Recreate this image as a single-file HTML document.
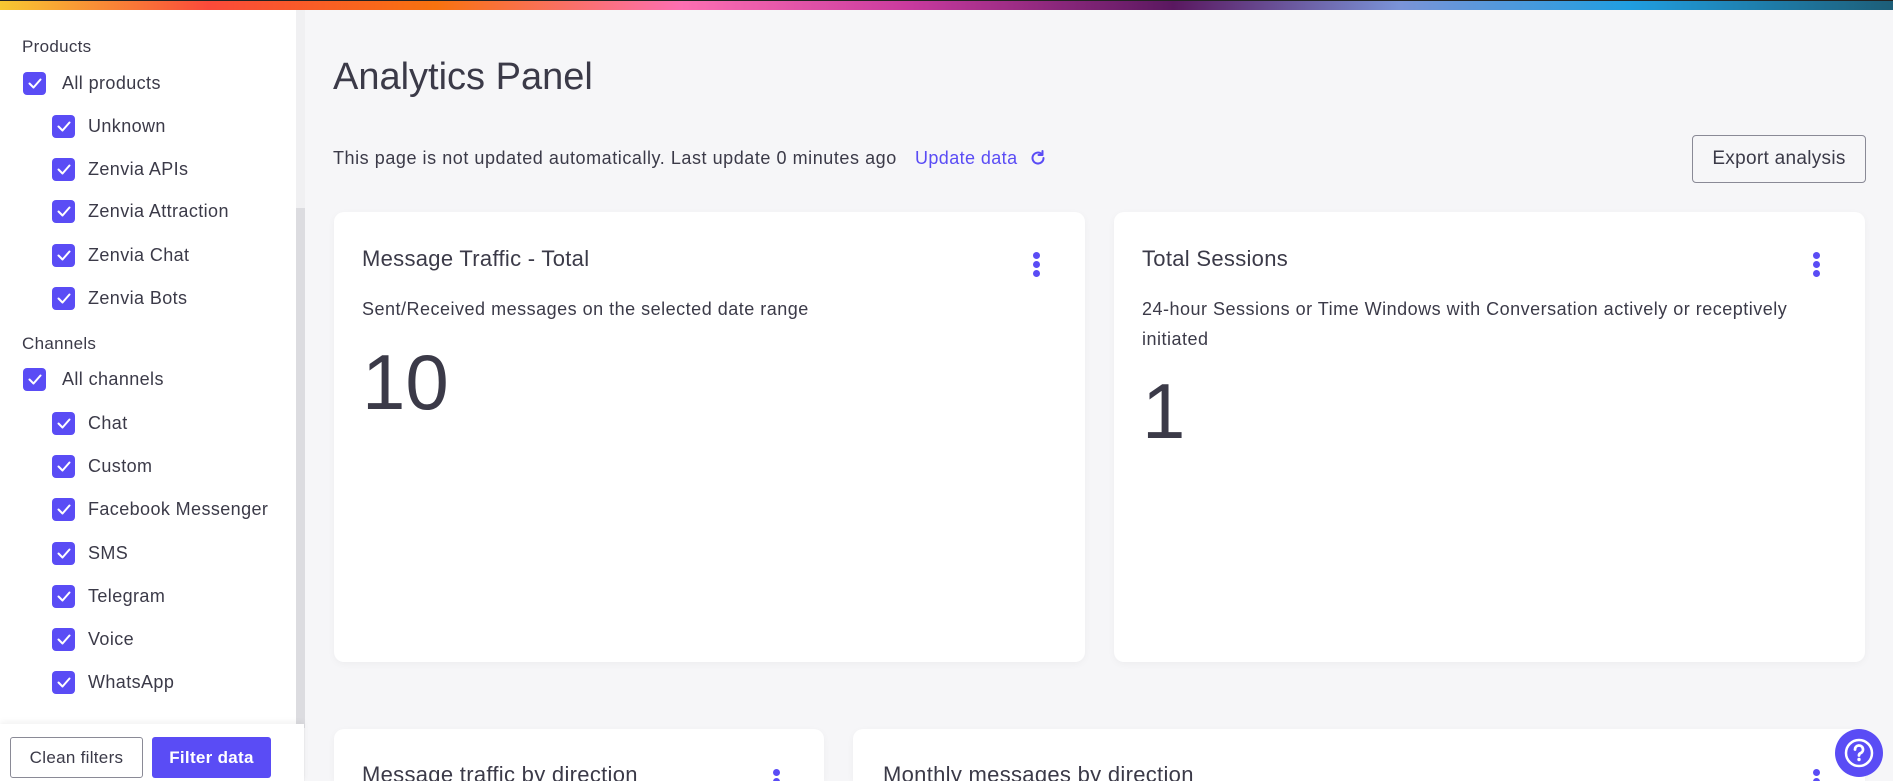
<!DOCTYPE html>
<html style="overflow:hidden;width:1893px;height:781px"><head><meta charset="utf-8"><style>
*{box-sizing:border-box;margin:0;padding:0}
body{width:1893px;height:781px;overflow:hidden;background:#f6f6f8;font-family:"Liberation Sans",sans-serif;color:#3b3a48;position:relative}
.bar{position:absolute;left:0;top:0;width:1893px;height:10px;background:linear-gradient(90deg,#f7c832 0%,#fb4a3a 11%,#f7720f 23%,#fd6fb2 36%,#c93a9e 48%,#5a1860 62%,#7a94d8 74%,#209ee0 86%,#1d5e78 100%);border-top:1px solid #222}
.side{position:absolute;left:0;top:10px;width:296px;height:771px;background:#fff}
.sb{position:absolute;left:296px;top:10px;width:9px;height:771px;background:#f0f0f2}
.sbt{position:absolute;left:296px;top:208px;width:9px;height:520px;background:#dcdce0}
.lbl{position:absolute;left:22px;font-size:17px;color:#3b3a48;letter-spacing:.3px}
.row{position:absolute;display:flex;align-items:center;font-size:18px;height:24px;letter-spacing:.4px}
.cb{width:23px;height:23px;background:#5a4cf5;border-radius:4px;margin-right:16px;display:flex;align-items:center;justify-content:center}
.bot{position:absolute;left:0;top:724px;width:304px;height:57px;background:#fff;box-shadow:0 -2px 6px rgba(0,0,0,.06)}
.btn{position:absolute;top:737px;height:41px;font-size:17px;display:flex;align-items:center;justify-content:center;border-radius:3px;letter-spacing:.3px}
h1{position:absolute;left:333px;top:56px;font-size:38px;font-weight:normal;color:#3b3a48}
.info{position:absolute;left:333px;top:148px;font-size:18px;letter-spacing:.55px}
.upd{position:absolute;left:915px;top:148px;font-size:18px;color:#5a4cf5;letter-spacing:.4px}
.exp{position:absolute;left:1692px;top:135px;width:174px;height:48px;border:1px solid #8a8a96;border-radius:4px;font-size:19px;display:flex;align-items:center;justify-content:center;letter-spacing:.3px}
.card{position:absolute;background:#fff;border-radius:10px;box-shadow:0 2px 8px rgba(0,0,0,.04)}
.ct{position:absolute;font-size:22px;letter-spacing:.3px}
.cs{position:absolute;font-size:18px;line-height:30px;letter-spacing:.5px}
.big{position:absolute;font-size:78px;font-weight:300}
.keb{position:absolute;width:7px}
.keb i{display:block;width:7px;height:7px;border-radius:50%;background:#5a4cf5;margin-bottom:2px}
.help{position:absolute;left:1835px;top:729px;width:48px;height:48px;border-radius:50%;background:#5a4cf5;display:flex;align-items:center;justify-content:center}
</style></head><body>
<div class="bar"></div>
<div class="side"></div><div class="sb"></div><div class="sbt"></div>
<div class="lbl" style="top:37px">Products</div>
<div class="row" style="left:23px;top:71px"><div class="cb"><svg width="14" height="11" viewBox="0 0 14 11"><path d="M1.5 5.5l4 4 7-8" stroke="#fff" stroke-width="2" fill="none" stroke-linecap="round" stroke-linejoin="round"/></svg></div>All products</div>
<div class="row" style="left:52px;top:114px"><div class="cb" style="margin-right:13px"><svg width="14" height="11" viewBox="0 0 14 11"><path d="M1.5 5.5l4 4 7-8" stroke="#fff" stroke-width="2" fill="none" stroke-linecap="round" stroke-linejoin="round"/></svg></div>Unknown</div>
<div class="row" style="left:52px;top:157px"><div class="cb" style="margin-right:13px"><svg width="14" height="11" viewBox="0 0 14 11"><path d="M1.5 5.5l4 4 7-8" stroke="#fff" stroke-width="2" fill="none" stroke-linecap="round" stroke-linejoin="round"/></svg></div>Zenvia APIs</div>
<div class="row" style="left:52px;top:199px"><div class="cb" style="margin-right:13px"><svg width="14" height="11" viewBox="0 0 14 11"><path d="M1.5 5.5l4 4 7-8" stroke="#fff" stroke-width="2" fill="none" stroke-linecap="round" stroke-linejoin="round"/></svg></div>Zenvia Attraction</div>
<div class="row" style="left:52px;top:243px"><div class="cb" style="margin-right:13px"><svg width="14" height="11" viewBox="0 0 14 11"><path d="M1.5 5.5l4 4 7-8" stroke="#fff" stroke-width="2" fill="none" stroke-linecap="round" stroke-linejoin="round"/></svg></div>Zenvia Chat</div>
<div class="row" style="left:52px;top:286px"><div class="cb" style="margin-right:13px"><svg width="14" height="11" viewBox="0 0 14 11"><path d="M1.5 5.5l4 4 7-8" stroke="#fff" stroke-width="2" fill="none" stroke-linecap="round" stroke-linejoin="round"/></svg></div>Zenvia Bots</div>
<div class="lbl" style="top:334px">Channels</div>
<div class="row" style="left:23px;top:367px"><div class="cb"><svg width="14" height="11" viewBox="0 0 14 11"><path d="M1.5 5.5l4 4 7-8" stroke="#fff" stroke-width="2" fill="none" stroke-linecap="round" stroke-linejoin="round"/></svg></div>All channels</div>
<div class="row" style="left:52px;top:411px"><div class="cb" style="margin-right:13px"><svg width="14" height="11" viewBox="0 0 14 11"><path d="M1.5 5.5l4 4 7-8" stroke="#fff" stroke-width="2" fill="none" stroke-linecap="round" stroke-linejoin="round"/></svg></div>Chat</div>
<div class="row" style="left:52px;top:454px"><div class="cb" style="margin-right:13px"><svg width="14" height="11" viewBox="0 0 14 11"><path d="M1.5 5.5l4 4 7-8" stroke="#fff" stroke-width="2" fill="none" stroke-linecap="round" stroke-linejoin="round"/></svg></div>Custom</div>
<div class="row" style="left:52px;top:497px"><div class="cb" style="margin-right:13px"><svg width="14" height="11" viewBox="0 0 14 11"><path d="M1.5 5.5l4 4 7-8" stroke="#fff" stroke-width="2" fill="none" stroke-linecap="round" stroke-linejoin="round"/></svg></div>Facebook Messenger</div>
<div class="row" style="left:52px;top:541px"><div class="cb" style="margin-right:13px"><svg width="14" height="11" viewBox="0 0 14 11"><path d="M1.5 5.5l4 4 7-8" stroke="#fff" stroke-width="2" fill="none" stroke-linecap="round" stroke-linejoin="round"/></svg></div>SMS</div>
<div class="row" style="left:52px;top:584px"><div class="cb" style="margin-right:13px"><svg width="14" height="11" viewBox="0 0 14 11"><path d="M1.5 5.5l4 4 7-8" stroke="#fff" stroke-width="2" fill="none" stroke-linecap="round" stroke-linejoin="round"/></svg></div>Telegram</div>
<div class="row" style="left:52px;top:627px"><div class="cb" style="margin-right:13px"><svg width="14" height="11" viewBox="0 0 14 11"><path d="M1.5 5.5l4 4 7-8" stroke="#fff" stroke-width="2" fill="none" stroke-linecap="round" stroke-linejoin="round"/></svg></div>Voice</div>
<div class="row" style="left:52px;top:670px"><div class="cb" style="margin-right:13px"><svg width="14" height="11" viewBox="0 0 14 11"><path d="M1.5 5.5l4 4 7-8" stroke="#fff" stroke-width="2" fill="none" stroke-linecap="round" stroke-linejoin="round"/></svg></div>WhatsApp</div>
<div class="bot"></div>
<div class="btn" style="left:10px;width:133px;border:1px solid #8a8a96">Clean filters</div>
<div class="btn" style="left:152px;width:119px;background:#5a4cf5;color:#fff;font-weight:bold">Filter data</div>
<h1>Analytics Panel</h1>
<div class="info">This page is not updated automatically. Last update 0 minutes ago</div>
<div class="upd">Update data <svg width="18" height="18" viewBox="0 0 18 18" style="vertical-align:-3px;margin-left:6px"><path d="M14.5 9A5.5 5.5 0 1 1 12.5 4.8" stroke="#5a4cf5" stroke-width="2" fill="none" stroke-linecap="round"/><path d="M13.5 2v4h-4" stroke="#5a4cf5" stroke-width="2" fill="none" stroke-linecap="round" stroke-linejoin="round"/></svg></div>
<div class="exp">Export analysis</div>
<div class="card" style="left:334px;top:212px;width:751px;height:450px"></div>
<div class="ct" style="left:362px;top:246px">Message Traffic - Total</div>
<div class="cs" style="left:362px;top:294px">Sent/Received messages on the selected date range</div>
<div class="big" style="left:362px;top:337px">10</div>
<div class="keb" style="left:1033px;top:252px"><i></i><i></i><i></i></div>
<div class="card" style="left:1114px;top:212px;width:751px;height:450px"></div>
<div class="ct" style="left:1142px;top:246px">Total Sessions</div>
<div class="cs" style="left:1142px;top:294px;width:700px">24-hour Sessions or Time Windows with Conversation actively or receptively initiated</div>
<div class="big" style="left:1142px;top:366px">1</div>
<div class="keb" style="left:1813px;top:252px"><i></i><i></i><i></i></div>
<div class="card" style="left:334px;top:729px;width:490px;height:52px;border-radius:10px 10px 0 0"></div>
<div class="ct" style="left:362px;top:762px">Message traffic by direction</div>
<div class="keb" style="left:773px;top:769px"><i></i><i></i><i></i></div>
<div class="card" style="left:853px;top:729px;width:1012px;height:52px;border-radius:10px 10px 0 0"></div>
<div class="ct" style="left:883px;top:762px">Monthly messages by direction</div>
<div class="keb" style="left:1813px;top:769px"><i></i><i></i><i></i></div>
<div class="help"><svg width="32" height="32" viewBox="0 0 32 32"><circle cx="16" cy="16" r="13" stroke="#fff" stroke-width="2.5" fill="none"/><path d="M12 12.5a4 4 0 1 1 5.5 3.7c-1 .4-1.5 1.2-1.5 2.3" stroke="#fff" stroke-width="2.8" fill="none" stroke-linecap="round"/><circle cx="16" cy="22.5" r="1.7" fill="#fff"/></svg></div>
</body></html>
